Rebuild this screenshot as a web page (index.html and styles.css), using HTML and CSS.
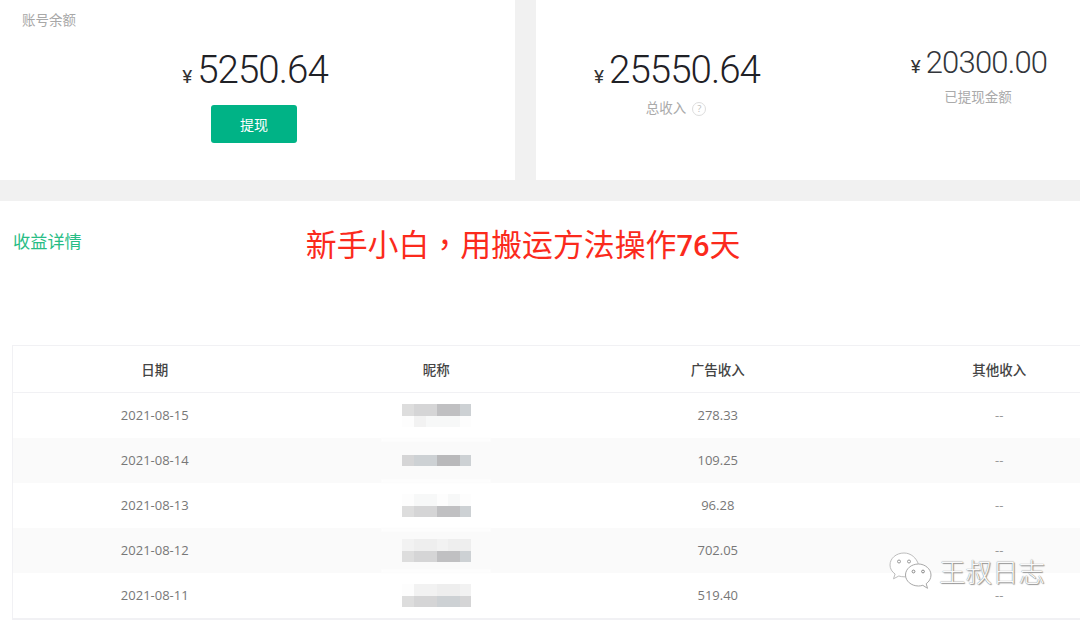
FILE: index.html
```html
<!DOCTYPE html>
<html lang="zh">
<head>
<meta charset="utf-8">
<title>收益详情</title>
<link rel="stylesheet" href="styles.css">
</head>
<body>
<div class="page">
  <section class="top">
    <div class="card balance">
      <div class="card-label">账号余额</div>
      <div class="amount big"><span class="yen">¥</span>5250.64</div>
      <button class="withdraw">提现</button>
    </div>
    <div class="card totals">
      <div class="stat stat-total">
        <div class="amount big"><span class="yen">¥</span>25550.64</div>
        <div class="stat-label">总收入<span class="help">?</span></div>
      </div>
      <div class="stat stat-paid">
        <div class="amount mid"><span class="yen">¥</span>20300.00</div>
        <div class="stat-label">已提现金额</div>
      </div>
    </div>
  </section>
  <section class="detail">
    <div class="detail-head">
      <h2 class="detail-title">收益详情</h2>
      <div class="headline">新手小白<span class="comma" lang="zh-TW">，</span>用搬运方法操作<span class="num">76</span>天</div>
    </div>
    <div class="table">
      <div class="row head"><div>日期</div><div>昵称</div><div>广告收入</div><div>其他收入</div></div>
      <div class="row">
        <div>2021-08-15</div>
        <div class="mosaic">
          <div class="mo-line main"><i class="s1"></i><i class="s2"></i><i class="s2"></i><i class="s4"></i><i class="s4"></i><i class="s3"></i></div>
          <div class="mo-line pale"><i class="s0"></i><i class="p1"></i><i class="p0"></i><i class="p0"></i><i class="p0"></i><i class="s0"></i></div>
        </div>
        <div>278.33</div><div class="dash">--</div>
      </div>
      <div class="row alt">
        <div>2021-08-14</div>
        <div class="mosaic">
          <div class="mo-line main"><i class="s2"></i><i class="s3"></i><i class="s3"></i><i class="s5"></i><i class="s5"></i><i class="s3"></i></div>
        </div>
        <div>109.25</div><div class="dash">--</div>
      </div>
      <div class="row">
        <div>2021-08-13</div>
        <div class="mosaic">
          <div class="mo-line pale"><i class="s0"></i><i class="p0"></i><i class="p0"></i><i class="s0"></i><i class="p0"></i><i class="s0"></i></div>
          <div class="mo-line main"><i class="s1"></i><i class="s2"></i><i class="s2"></i><i class="s4"></i><i class="s4"></i><i class="s3"></i></div>
        </div>
        <div>96.28</div><div class="dash">--</div>
      </div>
      <div class="row alt">
        <div>2021-08-12</div>
        <div class="mosaic">
          <div class="mo-line pale"><i class="p1"></i><i class="p2"></i><i class="p2"></i><i class="p1"></i><i class="p2"></i><i class="p2"></i></div>
          <div class="mo-line main"><i class="s1"></i><i class="s2"></i><i class="s2"></i><i class="s4"></i><i class="s4"></i><i class="s3"></i></div>
        </div>
        <div>702.05</div><div class="dash">--</div>
      </div>
      <div class="row">
        <div>2021-08-11</div>
        <div class="mosaic">
          <div class="mo-line pale"><i class="s0"></i><i class="p1"></i><i class="p1"></i><i class="p2"></i><i class="p2"></i><i class="p1"></i></div>
          <div class="mo-line main"><i class="s1"></i><i class="s2"></i><i class="s2"></i><i class="s3"></i><i class="s3"></i><i class="s2"></i></div>
        </div>
        <div>519.40</div><div class="dash">--</div>
      </div>
    </div>
  </section>
  <div class="watermark">
    <svg class="wx" width="44" height="38" viewBox="0 0 44 38" aria-hidden="true">
      <path d="M15 1C7.300 1 1 6.300 1 13c0 3.700 2 6.800 5.100 9l-1.600 4.800 5.300-2.800c1.600.5 3.300.8 5.200.8h1.500C30 21 31 17 29.500 12.500 27.500 6 22 1 15 1z" fill="#fff" stroke="#bdbdbd" stroke-width="1"/>
      <circle cx="10" cy="9.500" r="1.500" fill="#fff" stroke="#999" stroke-width="1"/>
      <circle cx="20" cy="9.500" r="1.500" fill="#fff" stroke="#999" stroke-width="1"/>
      <path d="M29.500 12c-7.300 0-13 5-13 11s5.700 11 13 11c1.500 0 3-.3 4.300-.7l4.700 3-1.300-4.600c2.900-2 4.800-5.100 4.800-8.700 0-6-6-11-12.500-11z" fill="#fff" stroke="#a8a8a8" stroke-width="1"/>
      <circle cx="24.500" cy="19.500" r="1.400" fill="#fff" stroke="#888" stroke-width="1"/>
      <circle cx="34" cy="19.500" r="1.400" fill="#fff" stroke="#888" stroke-width="1"/>
    </svg>
    <span class="wm-text">王叔日志</span>
  </div>
</div>
</body>
</html>
```
FILE: styles.css
```css
html, body {
  margin: 0;
  padding: 0;
  height: 620px;
  overflow: hidden;
  background: #f1f1f1;
}
body {
  font-family: "Open Sans", "Noto Sans CJK SC", sans-serif;
  color: #333;
}
.page {
  position: relative;
  width: 1080px;
  height: 620px;
  overflow: hidden;
}
.top {
  display: flex;
  gap: 21px;
  height: 180px;
  margin-bottom: 21px;
}
.card {
  background: #fff;
  height: 180px;
  box-sizing: border-box;
}
.balance {
  width: 515px;
  padding: 11px 5px 0 0;
  display: flex;
  flex-direction: column;
  align-items: center;
}
.card-label {
  align-self: flex-start;
  margin-left: 22px;
  font-size: 13.500px;
  line-height: 18px;
  color: #a8a8a8;
}
.amount {
  font-family: Roboto, sans-serif;
  color: #1f2126;
  font-weight: 300;
  white-space: nowrap;
  letter-spacing: -0.025em;
}
.big {
  font-size: 38.500px;
  line-height: 50px;
}
.mid {
  font-size: 31px;
  line-height: 42px;
  color: #33363b;
}
.yen {
  font-size: 19px;
  font-weight: 400;
  margin-right: 5px;
  letter-spacing: 0;
  color: #333;
}
.balance .amount {
  margin-top: 16px;
}
.withdraw {
  margin-top: 3px;
  margin-right: 2px;
  width: 86px;
  height: 38px;
  border: 0;
  border-radius: 3px;
  background: #00b386;
  color: #fff;
  font: 400 14px/38px "Noto Sans CJK SC", sans-serif;
  padding: 0;
}
.totals {
  flex: 1;
  display: grid;
  grid-template-columns: 282px 322px;
  overflow: hidden;
}
.stat {
  text-align: center;
}
.stat-total {
  padding-top: 45px;
}
.stat-paid {
  padding-top: 42px;
}
.stat-label {
  font-size: 13.500px;
  line-height: 18px;
  color: #aaa;
  white-space: nowrap;
}
.stat-total .stat-label {
  margin-top: -3px;
  padding-right: 2px;
}
.stat-paid .stat-label {
  margin-top: 0;
  padding-right: 2px;
}
.help {
  display: inline-block;
  width: 12px;
  height: 12px;
  margin-left: 6px;
  border: 1px solid #ddd;
  border-radius: 50%;
  font-size: 9.500px;
  line-height: 12px;
  color: #bbb;
  text-align: center;
  vertical-align: 1px;
}
.detail {
  background: #fff;
  height: 419px;
  padding-left: 12px;
  box-sizing: border-box;
}
.detail-head {
  display: flex;
  height: 144px;
}
.detail-title {
  margin: 28px 0 0 1px;
  font-size: 17.200px;
  line-height: 24px;
  font-weight: 400;
  color: #27bd85;
  font-family: "Noto Sans CJK SC", sans-serif;
}
.headline {
  margin: 20px 0 0 224px;
  font-size: 30.900px;
  line-height: 44px;
  color: #fb2a1c;
  white-space: nowrap;
  font-family: "Noto Sans CJK SC", sans-serif;
}
.comma {
  font-family: "Noto Sans CJK TC", sans-serif;
}
.num {
  font-family: Roboto, sans-serif;
  font-size: 29px;
  font-weight: 500;
}
.table {
  width: 1128px;
  border: 1px solid #f1f1f4;
  border-right: 0;
  border-bottom: 2px solid #f1f1f4;
  font-size: 13px;
  color: #777;
}
.row {
  display: grid;
  grid-template-columns: repeat(4, 281.500px);
  height: 45px;
  padding-left: 1px;
  align-items: center;
  text-align: center;
  line-height: 45px;
  white-space: nowrap;
}
.row > div {
  height: 45px;
}
.head {
  height: 46px;
  border-bottom: 1px solid #f1f1f4;
  font-size: 13.500px;
  font-weight: 500;
  color: #444;
  font-family: "Noto Sans CJK SC", sans-serif;
}
.alt {
  background: #fafafa;
}
.dash {
  color: #999;
}
.mosaic {
  position: relative;
  display: flex;
  flex-direction: column;
  justify-content: center;
  align-items: center;
}
.alt .mosaic::before,
.alt .mosaic::after {
  content: "";
  position: absolute;
  left: 85px;
  width: 110px;
  height: 4px;
  background: #fdfdfd;
  filter: blur(1px);
}
.alt .mosaic::before {
  top: 0;
}
.alt .mosaic::after {
  bottom: 0;
}
.mo-line {
  display: grid;
  grid-template-columns: 12px 12px 11px 11px 12px 11px;
  height: 11.500px;
  width: 69px;
}
.mo-line i {
  display: block;
}
.s0 { background: #fdfdfd; }
.s1 { background: #dddddd; }
.s2 { background: #d5d5d6; }
.s3 { background: #cdd1d4; }
.s4 { background: #c0c0c2; }
.s5 { background: #b9b9bb; }
.p0 { background: #f7f8f8; }
.p1 { background: #f2f2f2; }
.p2 { background: #eeeeee; }
.watermark {
  position: absolute;
  left: 889px;
  top: 552px;
  display: flex;
  align-items: center;
  gap: 6px;
}
.wm-text {
  font: 300 26.500px/36px "Noto Sans CJK SC", sans-serif;
  color: #fafafa;
  text-shadow: 0 0 1px #666, 1px 1px 1px #999;
  white-space: nowrap;
}
```
